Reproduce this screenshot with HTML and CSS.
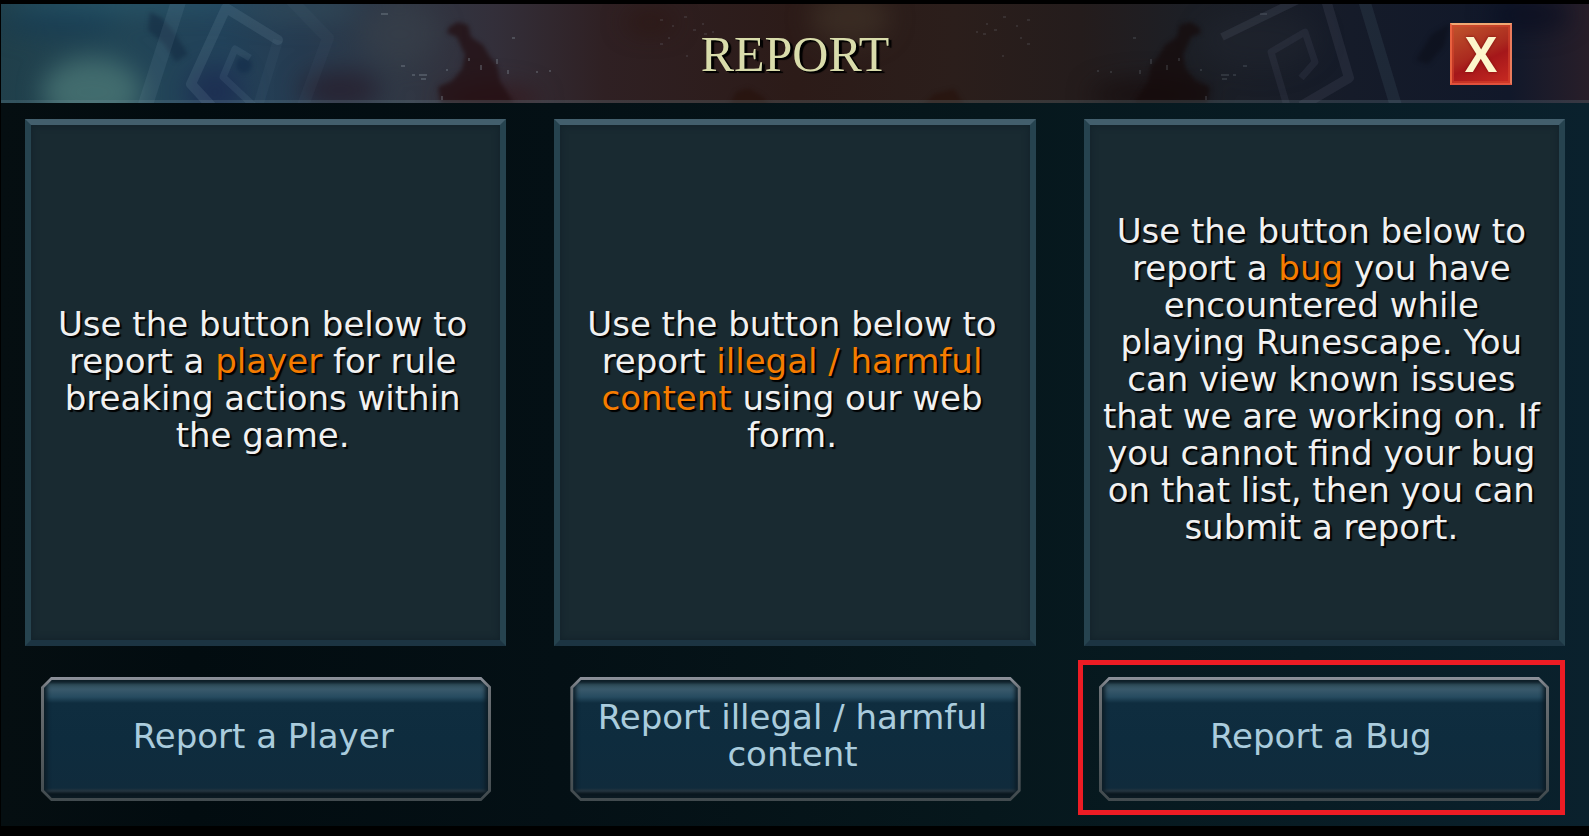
FILE: index.html
```html
<!DOCTYPE html>
<html lang="en">
<head>
<meta charset="utf-8">
<meta name="viewport" content="width=device-width, initial-scale=1">
<title>Report</title>
<link rel="stylesheet" href="styles.css">
</head>
<body>
<main class="window">
  <header class="titlebar">
    <svg class="titlebar-art" viewBox="1 4 1588 99" preserveAspectRatio="none" aria-hidden="true">
      <defs>
        <linearGradient id="base">
          <stop offset="0" stop-color="#203f4a"/>
          <stop offset=".07" stop-color="#224656"/>
          <stop offset=".14" stop-color="#22425a"/>
          <stop offset=".19" stop-color="#263b50"/>
          <stop offset=".25" stop-color="#303845"/>
          <stop offset=".31" stop-color="#332f3a"/>
          <stop offset=".38" stop-color="#2f2023"/>
          <stop offset=".5" stop-color="#2c1b18"/>
          <stop offset=".6" stop-color="#2b1e1b"/>
          <stop offset=".68" stop-color="#241c1c"/>
          <stop offset=".75" stop-color="#1c1f26"/>
          <stop offset=".85" stop-color="#151b29"/>
          <stop offset=".95" stop-color="#11182a"/>
          <stop offset="1" stop-color="#281e29"/>
        </linearGradient>
        <filter id="soft" filterUnits="userSpaceOnUse" x="-60" y="-60" width="1720" height="230" color-interpolation-filters="sRGB"><feGaussianBlur stdDeviation="12"/></filter>
        <filter id="edge" filterUnits="userSpaceOnUse" x="-60" y="-60" width="1720" height="230" color-interpolation-filters="sRGB"><feGaussianBlur stdDeviation="2"/></filter>
        <path id="stain" d="M449 27l9-5 10 3 3 12 12 8 7 12 7 8 3 16 14 22H441l-3-16 14-6 10-12 3-14-8-18-10-4z"/>
        <path id="specks" d="M381 14h7M401 66h4M412 75h3M419 75h8M421 79h5M446 70h2M469 58v3M481 65v5M497 59v5M508 70v4M442 96v4M536 72h2M549 71h2M512 38h3"/>
        <path id="dust" d="M660 20h3M672 26h2M684 17h3M693 30h3M702 24h2M668 38h2M660 44h3M704 34h3M712 32h2M686 56h2"/>
      </defs>
      <rect x="1" y="4" width="1588" height="99" fill="url(#base)"/>
      <g filter="url(#soft)">
        <ellipse cx="92" cy="92" rx="50" ry="34" fill="#4a7674" opacity=".8"/>
        <ellipse cx="60" cy="22" rx="60" ry="14" fill="#123a56" opacity=".5"/>
        <ellipse cx="130" cy="2" rx="130" ry="6" fill="#2d6478" opacity=".8"/>
        <ellipse cx="215" cy="92" rx="28" ry="26" fill="#1b2850" opacity=".7"/>
        <ellipse cx="300" cy="8" rx="60" ry="12" fill="#35525f" opacity=".6"/>
        <ellipse cx="340" cy="90" rx="40" ry="20" fill="#261b2a" opacity=".7"/>
        <ellipse cx="400" cy="34" rx="40" ry="30" fill="#3a414c" opacity=".5"/>
        <ellipse cx="490" cy="100" rx="50" ry="14" fill="#351417" opacity=".7"/>
        <ellipse cx="850" cy="18" rx="40" ry="26" fill="#42352a" opacity=".6"/>
        <ellipse cx="650" cy="22" rx="26" ry="10" fill="#2b130b" opacity=".6"/>
        <ellipse cx="1150" cy="95" rx="60" ry="16" fill="#170c0b" opacity=".7"/>
        <ellipse cx="1260" cy="40" rx="60" ry="30" fill="#222733" opacity=".4"/>
        <ellipse cx="1530" cy="15" rx="40" ry="16" fill="#080d20" opacity=".7"/>
      </g>
      <g filter="url(#edge)">
        <path d="M150 12l12 6 12 14 14 22-12 8-12-18-16-14z" fill="#142b42" opacity=".6"/>
        <circle cx="244" cy="65" r="8" fill="#122b4a" opacity=".6"/>
        <use href="#stain" fill="#220d10" opacity=".7"/>
        <use href="#stain" fill="#150a0a" opacity=".7" transform="translate(1648) scale(-1 1)"/>
        <path d="M728 108l8-16 12-4 14 8 10 12zM920 108l14-14 20-5 12 19z" fill="#26110a" opacity=".6"/>
        <path d="M1450 24l-18 10-16 26 12 4 16-18z" fill="#090b16" opacity=".5"/>
      </g>
      <g fill="none" stroke-linejoin="round" stroke="#8fb4c4">
        <path d="M179 0l-34 106" stroke-width="15" opacity=".1"/>
        <path d="M278 40l-52-32-35 76 22 24" stroke-width="10" opacity=".13" stroke-linecap="round"/>
        <path d="M250 58l-15-9-12 28 32 30" stroke-width="7" opacity=".1"/>
        <path d="M291 0l37 38-26 70" stroke-width="12" opacity=".04"/>
        <path d="M278 40l-20 66" stroke-width="10" opacity=".05"/>
      </g>
      <g fill="none" stroke-linejoin="round" stroke="#8f95ac">
        <path d="M1222 37l78-38" stroke-width="8" opacity=".12"/>
        <path d="M1326 0l23 78-48 28" stroke-width="10" opacity=".11"/>
        <path d="M1301 78l14-16-10-30-34 20 16 54" stroke-width="7" opacity=".09"/>
        <path d="M1364 0l32 106" stroke-width="12" opacity=".1" stroke="#7fa6b8"/>
      </g>
      <g stroke="#8f99a3" stroke-width="2" opacity=".32">
        <use href="#specks"/>
        <use href="#specks" transform="translate(1648) scale(-1 1)" opacity=".6"/>
        <use href="#dust" opacity=".5"/>
        <use href="#dust" transform="translate(1690) scale(-1 1)" opacity=".5"/>
      </g>
      <rect x="1" y="100" width="1588" height="3" fill="#82a0aa" opacity=".2"/>
    </svg>
    <h1 class="title">REPORT</h1>
    <button class="close" type="button" aria-label="Close">X</button>
  </header>

  <div class="options">
    <section class="option">
      <p class="panel"><span>Use the button below to report a <em>player</em> for rule breaking actions within the game.</span></p>
      <div class="action"><button class="report" type="button"><span>Report a Player</span></button></div>
    </section>
    <section class="option">
      <p class="panel"><span>Use the button below to report <em>illegal / harmful content</em> using our web form.</span></p>
      <div class="action"><button class="report" type="button"><span>Report illegal / harmful content</span></button></div>
    </section>
    <section class="option">
      <p class="panel"><span>Use the button below to report a <em>bug</em> you have encountered while playing Runescape. You can view known issues that we are working on. If you cannot find your bug on that list, then you can submit a report.</span></p>
      <div class="action highlighted"><button class="report" type="button"><span>Report a Bug</span></button></div>
    </section>
  </div>
</main>
</body>
</html>
```
FILE: styles.css
```css
* {
  box-sizing: border-box;
}

body {
  margin: 0;
  background: #000;
  font-family: "DejaVu Sans", sans-serif;
  font-size: 34px;
  line-height: 37px;
}

.window {
  display: flex;
  flex-direction: column;
  min-height: 100vh;
  border: solid #000;
  border-width: 4px 0 10px 1px;
  background: linear-gradient(90deg, #050e11 0%, #020c10 12%, #041015 35%, #06171c 62%, #081c24 82%, #0a212d 100%);
}

.titlebar {
  position: relative;
  display: grid;
  grid-template-columns: 1fr auto 1fr;
  align-items: center;
  height: 99px;
  padding: 0 77px;
}

.titlebar-art {
  position: absolute;
  top: 0;
  left: 0;
  width: 100%;
  height: 100%;
}

.title {
  position: relative;
  grid-column: 2;
  margin: 0;
  color: #d9dcab;
  font: 400 50px/56px "Liberation Serif", serif;
  text-shadow: 1px 1px 0 #000, 3px 2px 1px #000;
}

.close {
  position: relative;
  justify-self: end;
  width: 62px;
  height: 62px;
  padding: 0;
  border: 2px solid;
  border-color: #f0a873 #ea7b5c #e0503c #e9603f;
  background: linear-gradient(155deg, #c0552c 0%, #ab2a1f 48%, #a5171a 60%, #c92a22 100%);
  box-shadow: inset 0 0 0 2px rgba(215, 70, 45, 0.55);
  color: #fdf6cc;
  font: 700 48px/56px "Open Sans", sans-serif;
  text-shadow: 0 0 3px #7a0d0d;
}

.options {
  flex: 1;
  display: grid;
  grid-template-columns: repeat(3, 1fr);
  gap: 48px;
  padding: 16px 24px 11px;
}

.option {
  display: flex;
  flex-direction: column;
  gap: 14px;
}

.panel {
  flex: 1;
  display: flex;
  align-items: center;
  justify-content: center;
  margin: 0;
  padding: 0 16px 6px 10px;
  border: 6px solid;
  border-color: #435f6d #26434f #1c3442 #26434f;
  background: #192a31;
  box-shadow: inset 0 0 6px 1px #13222b;
  color: #f1f1f1;
  text-align: center;
  text-shadow: 2px 2px 1px #000;
}

.panel em {
  color: #f57c00;
  font-style: normal;
}

.action {
  display: flex;
  padding: 12px 10px 9px 11px;
  border: 5px solid transparent;
}

.highlighted {
  margin-left: -6px;
  padding-left: 16px;
  padding-right: 11px;
  border-color: #ed1c24;
}

/* Chamfered metal rim with the face inset inside it. */
.report {
  flex: 1;
  min-height: 124px;
  padding: 3px;
  border: 0;
  background: linear-gradient(#8e929c 0, #858a92 3px, #6b7075 12px, #5a6063 50%, #414a4e 100%);
  clip-path: polygon(10px 0, calc(100% - 10px) 0, 100% 10px, 100% calc(100% - 10px), calc(100% - 10px) 100%, 10px 100%, 0 calc(100% - 10px), 0 10px);
  color: #aaccdd;
  font: inherit;
  text-align: center;
}

.report span {
  display: flex;
  align-items: center;
  justify-content: center;
  min-height: 118px;
  padding: 0 16px 6px 10px;
  background: linear-gradient(#132630 0, #33525f 4px, #38586a 10px, #264b60 17px, #0f2d3f 23px, #0e2c3e 50%, #102b3c 108px, #26353f 111px, #0a161d 114px, #080f14 100%);
  box-shadow: inset 0 0 4px 3px #0c1c26;
  clip-path: polygon(8px 0, calc(100% - 8px) 0, 100% 8px, 100% calc(100% - 8px), calc(100% - 8px) 100%, 8px 100%, 0 calc(100% - 8px), 0 8px);
}
```
